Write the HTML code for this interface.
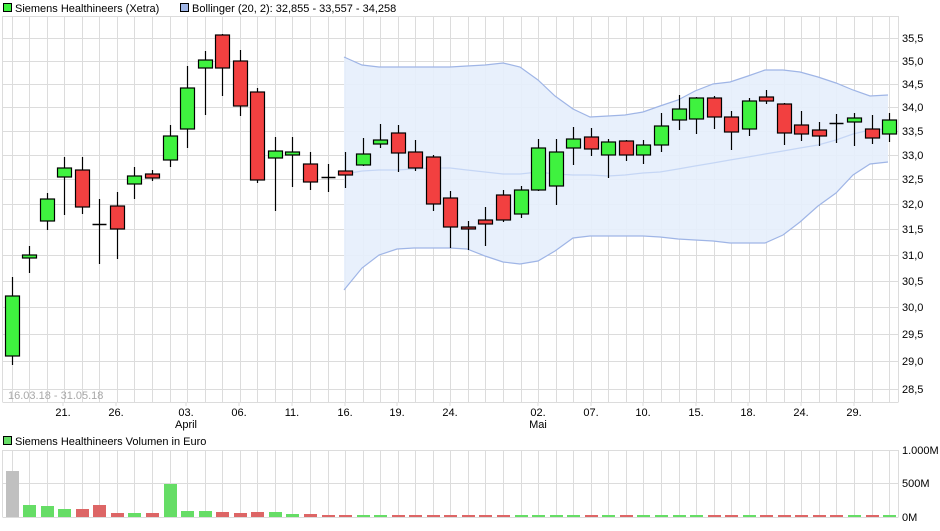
<!DOCTYPE html>
<html><head><meta charset="utf-8"><style>
html,body{margin:0;padding:0;background:#fff;}
body{width:940px;height:526px;overflow:hidden;font-family:"Liberation Sans",sans-serif;}
svg text{font-family:"Liberation Sans",sans-serif;font-size:11px;fill:#000;}
</style></head><body>
<svg id="s" width="940" height="526" xmlns="http://www.w3.org/2000/svg"></svg>
<script>
const s=document.getElementById('s');let h='';
const X0=2.5,X1=898.5,T=16,B=402;
const cx=i=>11.6+17.55*i;
// price grid
const ys=[[38,'35,5'],[61,'35,0'],[84,'34,5'],[107,'34,0'],[131,'33,5'],[155,'33,0'],[179,'32,5'],[204,'32,0'],[229,'31,5'],[255,'31,0'],[281,'30,5'],[307,'30,0'],[334,'29,5'],[361,'29,0'],[389,'28,5']];
let g='';
for(let i=0;i<51;i++){const x=Math.round(cx(i))+0.5;g+=`<line x1="${x}" y1="${T}" x2="${x}" y2="${B}"/>`;g+=`<line x1="${x}" y1="450" x2="${x}" y2="517"/>`;}
ys.forEach(([y])=>{g+=`<line x1="${X0}" y1="${y+.5}" x2="${X1}" y2="${y+.5}"/>`;});
g+=`<line x1="${X0}" y1="${T+.5}" x2="${X1}" y2="${T+.5}"/><line x1="${X0}" y1="${B+.5}" x2="${X1}" y2="${B+.5}"/>`;
g+=`<line x1="${X0}" y1="${T}" x2="${X0}" y2="${B}"/><line x1="${X1}" y1="${T}" x2="${X1}" y2="${B}"/>`;
g+=`<line x1="${X0}" y1="450.5" x2="${X1}" y2="450.5"/><line x1="${X0}" y1="483.5" x2="${X1}" y2="483.5"/><line x1="${X0}" y1="517.5" x2="${X1}" y2="517.5"/>`;
g+=`<line x1="${X0}" y1="450" x2="${X0}" y2="517"/><line x1="${X1}" y1="450" x2="${X1}" y2="517"/>`;
h+=`<g stroke="#dcdcdc" stroke-width="1">${g}</g>`;
// bollinger
const bx=[344,362,379,397,414,432,450,467,485,503,520,538,555,573,590,608,625,643,660,678,695,713,730,748,765,783,800,818,836,853,870,888];
const up=[57,65,67,67,67,67,67,66,65,63,67,80,96,109,117,116,115,112,106,100,91,84,82,76,70,70,72,77,83,90,96,95];
const lo=[290,268,255,249,248,248,248,249,256,262,264,261,251,238,236,236,236,236,237,239,240,241,243,243,243,235,222,206,193,175,164,162];
const mid=[174,171,170,170,169,168,168,170,172,174,174,172,174,175,175,176,175,173,172,169,166,163,160,157,154,151,148,145,140,134,130,129];
let pu=bx.map((x,i)=>x+','+up[i]).join(' '),pl=bx.map((x,i)=>x+','+lo[i]).reverse().join(' ');
h+=`<polygon points="${pu} ${pl}" fill="#e6eefc" fill-opacity="0.9"/>`;
h+=`<polyline points="${pu}" fill="none" stroke="#9fb5e6" stroke-width="1.2"/>`;
h+=`<polyline points="${bx.map((x,i)=>x+','+lo[i]).join(' ')}" fill="none" stroke="#9fb5e6" stroke-width="1.2"/>`;
h+=`<polyline points="${bx.map((x,i)=>x+','+mid[i]).join(' ')}" fill="none" stroke="#c5d6f5" stroke-width="1.2"/>`;
// candles [bodyTop,bodyBot,wickTop,wickBot,color]
const c=[[296,356,277,365,'g'],[255,258,246,273,'g'],[199,221,193,230,'g'],[168,177,157,215,'g'],[170,207,157,214,'r'],[224,225,199,264,'k'],[206,229,192,259,'r'],[176,184,167,199,'g'],[174,178,170,181,'r'],[136,160,125,167,'g'],[88,129,66,148,'g'],[60,68,51,115,'g'],[35,68,34,96,'r'],[61,106,50,116,'r'],[92,180,88,183,'r'],[151,158,137,211,'g'],[152,155,137,187,'g'],[164,182,152,190,'r'],[177,178,164,192,'k'],[171,175,152,188,'r'],[154,165,138,166,'g'],[140,144,124,148,'g'],[133,153,125,172,'r'],[152,168,140,171,'r'],[157,204,155,211,'r'],[198,227,191,248,'r'],[227,229,221,250,'r'],[220,224,207,246,'r'],[195,220,190,222,'r'],[190,214,186,218,'g'],[148,190,139,191,'g'],[152,186,139,205,'g'],[139,148,127,165,'g'],[137,149,128,156,'r'],[142,155,139,178,'g'],[141,155,140,161,'r'],[145,155,140,164,'g'],[126,145,113,152,'g'],[109,120,95,130,'g'],[98,119,97,134,'g'],[98,117,96,129,'r'],[117,132,111,150,'r'],[101,129,98,136,'g'],[97,101,90,104,'r'],[104,133,103,145,'r'],[125,134,111,141,'r'],[130,136,122,146,'r'],[123,123,114,143,'k'],[118,122,113,146,'g'],[129,138,115,144,'r'],[120,134,113,142,'g']];
const vol=[471,505,506,509,509,505,513,513,513,484,511,511,512,513,512,512,514,514,515,515,515,515,515,515,515,515,515,515,515,515,515,515,515,515,515,515,515,515,515,515,515,515,515,515,515,515,515,515,515,515,515];
c.forEach((d,i)=>{const x=Math.round(cx(i))+0.5;
 h+=`<line x1="${x}" y1="${d[2]}" x2="${x}" y2="${d[3]}" stroke="#000" stroke-width="1.2"/>`;
 if(d[4]=='k'){h+=`<line x1="${x-7}" y1="${d[0]+.5}" x2="${x+7}" y2="${d[0]+.5}" stroke="#000" stroke-width="1.5"/>`;}
 else h+=`<rect x="${x-7}" y="${d[0]}" width="14" height="${Math.max(d[1]-d[0],2)}" fill="${d[4]=='g'?'#3ff23f':'#f24040'}" stroke="#000" stroke-width="1.2"/>`;
 const col=i==0?'#c0c0c0':(d[4]=='g'?'#66dd66':'#dd6666');
 h+=`<rect x="${x-6.5}" y="${vol[i]}" width="13" height="${517-vol[i]}" fill="${col}"/>`;
});
// axis labels
ys.forEach(([y,t])=>{h+=`<text x="902" y="${y+4}">${t}</text>`;});
h+=`<text x="902" y="454">1.000M</text><text x="902" y="487">500M</text><text x="902" y="521">0M</text>`;
const xl=[[63,'21.'],[116,'26.'],[186,'03.'],[239,'06.'],[292,'11.'],[345,'16.'],[397,'19.'],[450,'24.'],[538,'02.'],[591,'07.'],[643,'10.'],[696,'15.'],[748,'18.'],[801,'24.'],[854,'29.']];
xl.forEach(([x,t])=>{h+=`<line x1="${x}" y1="402" x2="${x}" y2="406" stroke="#dcdcdc"/><text x="${x}" y="416" text-anchor="middle">${t}</text>`;});
h+=`<text x="186" y="428" text-anchor="middle">April</text><text x="538" y="428" text-anchor="middle">Mai</text>`;
h+=`<text x="8" y="399" fill="#aaa" style="fill:#a8a8a8">16.03.18 - 31.05.18</text>`;
// legends
h+=`<rect x="3.5" y="3.5" width="8" height="8" fill="#3ff23f" stroke="#000"/><text x="15" y="12">Siemens Healthineers (Xetra)</text>`;
h+=`<rect x="180.5" y="3.5" width="8" height="8" fill="#9fb5e6" stroke="#000"/><text x="192" y="12">Bollinger (20, 2): 32,855 - 33,557 - 34,258</text>`;
h+=`<rect x="3.5" y="436.5" width="8" height="8" fill="#66dd66" stroke="#000"/><text x="15" y="445">Siemens Healthineers Volumen in Euro</text>`;
s.innerHTML=h;
</script>
</body></html>
